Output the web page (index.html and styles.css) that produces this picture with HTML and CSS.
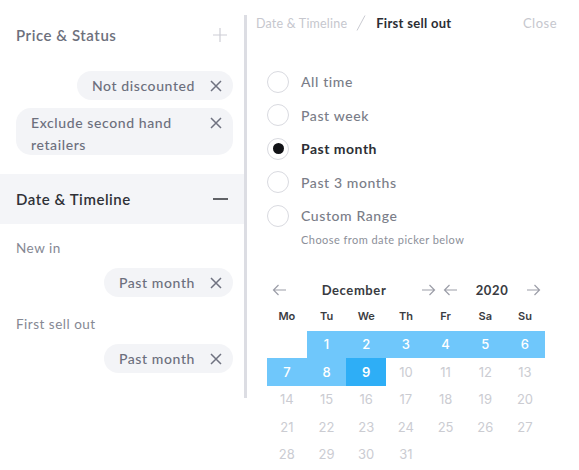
FILE: index.html
```html
<!DOCTYPE html>
<html>
<head>
<meta charset="utf-8">
<link rel="stylesheet" href="styles.css">
</head>
<body>
<div class="app">
  <aside class="filters">
    <div class="section-head">
      <span class="section-title">Price &amp; Status</span>
      <svg class="plus" width="14" height="14" viewBox="0 0 14 14"><path d="M7 0V14M0 7H14" stroke="#cdced5" stroke-width="1.2" fill="none"/></svg>
    </div>
    <div class="chips first">
      <div class="chip"><span class="chip-text">Not discounted</span><svg class="x" width="12" height="12" viewBox="0 0 12 12"><path d="M1 1L11 11M11 1L1 11" stroke="#6f7280" stroke-width="1.5" fill="none"/></svg></div>
      <div class="chip wide"><span class="chip-text">Exclude second hand retailers</span><svg class="x" width="12" height="12" viewBox="0 0 12 12"><path d="M1 1L11 11M11 1L1 11" stroke="#6f7280" stroke-width="1.5" fill="none"/></svg></div>
    </div>
    <div class="section-head active">
      <span class="section-title dark">Date &amp; Timeline</span>
      <svg class="minus" width="15" height="14" viewBox="0 0 15 14"><path d="M0 7H15" stroke="#2f3137" stroke-width="1.5" fill="none"/></svg>
    </div>
    <div class="field-label">New in</div>
    <div class="chips">
      <div class="chip"><span class="chip-text">Past month</span><svg class="x" width="12" height="12" viewBox="0 0 12 12"><path d="M1 1L11 11M11 1L1 11" stroke="#6f7280" stroke-width="1.5" fill="none"/></svg></div>
    </div>
    <div class="field-label">First sell out</div>
    <div class="chips">
      <div class="chip"><span class="chip-text">Past month</span><svg class="x" width="12" height="12" viewBox="0 0 12 12"><path d="M1 1L11 11M11 1L1 11" stroke="#6f7280" stroke-width="1.5" fill="none"/></svg></div>
    </div>
  </aside>

  <main class="detail">
    <div class="crumbs">
      <span class="crumb-muted">Date &amp; Timeline</span>
      <svg class="slash" width="10" height="16" viewBox="0 0 10 16"><path d="M9 0.5L1 15.5" stroke="#c9cad1" stroke-width="1" fill="none"/></svg>
      <span class="crumb-current">First sell out</span>
      <span class="close">Close</span>
    </div>

    <div class="options">
      <div class="option"><span class="radio"></span><span class="opt-label">All time</span></div>
      <div class="option"><span class="radio"></span><span class="opt-label">Past week</span></div>
      <div class="option selected"><span class="radio"><span class="dot"></span></span><span class="opt-label">Past month</span></div>
      <div class="option"><span class="radio"></span><span class="opt-label">Past 3 months</span></div>
      <div class="option"><span class="radio"></span><span class="opt-label">Custom Range</span></div>
      <div class="hint">Choose from date picker below</div>
    </div>

    <div class="calendar">
      <div class="cal-head">
        <div class="nav month-nav">
          <svg class="arrow" width="15" height="12" viewBox="0 0 15 12"><path d="M14 6H1.5M6.5 1L1.5 6L6.5 11" stroke="#9c9ea8" stroke-width="1.2" fill="none"/></svg>
          <span class="nav-label">December</span>
          <svg class="arrow" width="15" height="12" viewBox="0 0 15 12"><path d="M1 6H13.5M8.5 1L13.5 6L8.5 11" stroke="#9c9ea8" stroke-width="1.2" fill="none"/></svg>
        </div>
        <div class="nav year-nav">
          <svg class="arrow" width="15" height="12" viewBox="0 0 15 12"><path d="M14 6H1.5M6.5 1L1.5 6L6.5 11" stroke="#9c9ea8" stroke-width="1.2" fill="none"/></svg>
          <span class="nav-label">2020</span>
          <svg class="arrow" width="15" height="12" viewBox="0 0 15 12"><path d="M1 6H13.5M8.5 1L13.5 6L8.5 11" stroke="#9c9ea8" stroke-width="1.2" fill="none"/></svg>
        </div>
      </div>
      <div class="weekdays">
        <span>Mo</span><span>Tu</span><span>We</span><span>Th</span><span>Fr</span><span>Sa</span><span>Su</span>
      </div>
      <div class="days">
        <span></span>
        <span class="in">1</span><span class="in">2</span><span class="in">3</span><span class="in">4</span><span class="in">5</span><span class="in">6</span>
        <span class="in">7</span><span class="in">8</span><span class="in sel">9</span><span>10</span><span>11</span><span>12</span><span>13</span>
        <span>14</span><span>15</span><span>16</span><span>17</span><span>18</span><span>19</span><span>20</span>
        <span>21</span><span>22</span><span>23</span><span>24</span><span>25</span><span>26</span><span>27</span>
        <span>28</span><span>29</span><span>30</span><span>31</span>
      </div>
    </div>
  </main>
</div>
</body>
</html>
```

FILE: styles.css
```css
* { box-sizing: border-box; }
html, body { margin: 0; padding: 0; background: #fff; }
body {
  font-family: Lato, "Open Sans", sans-serif;
  width: 579px;
  height: 470px;
  overflow: hidden;
}
.app {
  display: flex;
  align-items: flex-start;
}

/* Left filter column */
.filters {
  width: 247px;
  flex: none;
  margin-top: 15px;
  height: 383px;
  border-right: 3px solid #dcdde3;
  display: flex;
  flex-direction: column;
}
.section-head {
  height: 40px;
  display: flex;
  align-items: center;
  justify-content: space-between;
  padding: 0 17px 0 16px;
}
.section-head.active {
  background: #f4f5f8;
  height: 50px;
  margin-top: 19px;
  padding-right: 16px;
}
.section-title {
  font-size: 15px;
  font-weight: 600;
  color: #6d707c;
  letter-spacing: 0.55px;
}
.section-title.dark { color: #2f3137; }
.plus, .minus { display: block; }

.chips {
  display: flex;
  flex-direction: column;
  align-items: flex-end;
  gap: 8px;
  padding: 0 11px 0 16px;
  margin-top: 10px;
}
.chips.first { margin-top: 16px; }
.chip {
  display: flex;
  align-items: flex-start;
  gap: 15px;
  background: #f3f4f7;
  border-radius: 15px;
  padding: 4.5px 11px 4.5px 15px;
  max-width: 100%;
}
.chip.wide { width: 100%; padding-top: 4px; padding-bottom: 0; }
.chip-text {
  font-size: 14px;
  line-height: 20px;
  font-weight: 500;
  color: #6c6f7d;
  letter-spacing: 0.6px;
  flex: 1;
}
.chip.wide .chip-text { line-height: 21.5px; }
.x { flex: none; margin-top: 4px; }
.chip.wide .x { margin-top: 5px; }

.field-label {
  font-size: 13.5px;
  line-height: 20px;
  color: #858893;
  letter-spacing: 0.5px;
  padding-left: 16px;
  margin-top: 14px;
}
.field-label + .chips { margin-top: 10px; }
.chips + .field-label { margin-top: 17px; }

/* Right detail column */
.detail {
  flex: 1;
  display: flex;
  flex-direction: column;
}
.crumbs {
  height: 46px;
  display: flex;
  align-items: center;
  padding: 0 22px 0 9px;
  font-size: 13px;
}
.crumb-muted {
  color: #c6c7ce;
  letter-spacing: 0.2px;
  font-size: 12.5px;
}
.slash { margin: 0 10px 0 9px; display: block; }
.crumb-current {
  color: #2b2d33;
  font-weight: 700;
  letter-spacing: 0.3px;
}
.close {
  margin-left: auto;
  color: #c6c7ce;
  letter-spacing: 0.5px;
}

.options {
  padding-left: 20px;
  margin-top: 19px;
}
.option {
  height: 33.5px;
  display: flex;
  align-items: center;
  gap: 12px;
}
.radio {
  width: 22px;
  height: 22px;
  border-radius: 50%;
  border: 1.5px solid #d9dae0;
  display: flex;
  align-items: center;
  justify-content: center;
  flex: none;
}
.dot {
  width: 11px;
  height: 11px;
  border-radius: 50%;
  background: #121317;
}
.opt-label {
  font-size: 14px;
  font-weight: 500;
  color: #7a7d88;
  letter-spacing: 0.6px;
}
.option.selected .opt-label { color: #2d2f35; font-weight: 700; letter-spacing: 0.5px; }
.hint {
  padding-left: 34px;
  font-size: 11px;
  line-height: 14px;
  color: #8c8f99;
  letter-spacing: 0.45px;
}

.calendar {
  margin-top: 31px;
  padding-left: 20px;
  width: 298px;
}
.cal-head {
  height: 24px;
  display: flex;
  gap: 2px;
}
.nav {
  display: flex;
  align-items: center;
  justify-content: space-between;
  padding: 0 3px 0 5px;
}
.month-nav { width: 172px; }
.year-nav { width: 104px; padding: 0 4px 0 2px; }
.arrow { display: block; }
.nav-label {
  font-size: 13px;
  font-weight: 700;
  color: #393b41;
  letter-spacing: 0.6px;
}
.weekdays, .days {
  display: grid;
  grid-template-columns: repeat(7, 39.7px);
}
.weekdays span {
  height: 29px;
  display: flex;
  align-items: center;
  justify-content: center;
  font-family: Inter, sans-serif;
  font-size: 11px;
  font-weight: 600;
  color: #3a3c42;
}
.days span {
  height: 27.5px;
  display: flex;
  align-items: center;
  justify-content: center;
  font-family: Inter, sans-serif;
  font-size: 13px;
  color: #cbccd2;
}
.days span.in {
  background: #6fc7fb;
  color: #fff;
  font-weight: 500;
}
.days span.sel {
  background: #2eaef6;
  font-weight: 600;
}
```
